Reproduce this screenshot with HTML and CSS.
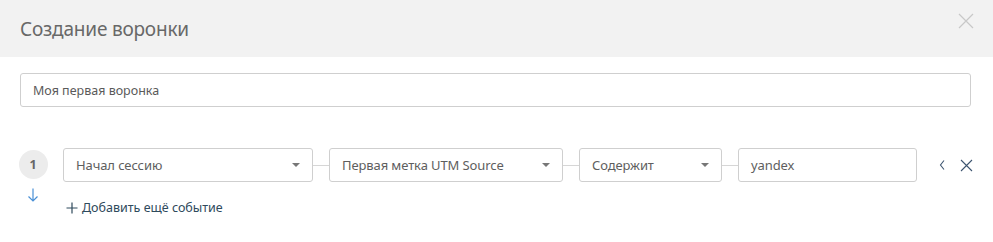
FILE: index.html
```html
<!DOCTYPE html>
<html lang="ru">
<head>
<meta charset="utf-8">
<link rel="stylesheet" href="styles.css">
</head>
<body>
<div class="modal">
  <div class="header">
    <h1 class="title">Создание воронки</h1>
    <svg class="close" width="16" height="16" viewBox="0 0 16 16"><path d="M1 1L15 15M15 1L1 15" stroke="#c8c8c8" stroke-width="1.2" fill="none"/></svg>
  </div>
  <div class="body">
    <div class="name-input">Моя первая воронка</div>
    <div class="step">
      <div class="step-side">
        <div class="num">1</div>
        <svg class="down" width="12" height="14" viewBox="0 0 12 14"><path d="M6 0.5V13M1.5 8.5L6 13L10.5 8.5" stroke="#4a90d6" stroke-width="1.2" fill="none"/></svg>
      </div>
      <div class="step-main">
        <div class="fields">
          <div class="field select s1"><span>Начал сессию</span><i class="caret"></i></div>
          <div class="link"></div>
          <div class="field select s2"><span>Первая метка UTM Source</span><i class="caret"></i></div>
          <div class="link"></div>
          <div class="field select s3"><span>Содержит</span><i class="caret"></i></div>
          <div class="link"></div>
          <div class="field s4"><span>yandex</span></div>
          <div class="actions">
            <svg width="8" height="12" viewBox="0 0 8 12"><path d="M6 1.5L2.5 6L6 10.5" stroke="#3d5570" stroke-width="1.1" fill="none"/></svg>
            <svg width="13" height="13" viewBox="0 0 13 13"><path d="M1 1L12 12M12 1L1 12" stroke="#3d5570" stroke-width="1.1" fill="none"/></svg>
          </div>
        </div>
        <div class="add"><svg class="plus" width="12" height="12" viewBox="0 0 12 12"><path d="M6 0.5V11.5M0.5 6H11.5" stroke="#2f4a5c" stroke-width="1.2" fill="none"/></svg>Добавить ещё событие</div>
      </div>
    </div>
  </div>
</div>
</body>
</html>
```
FILE: styles.css
```css
* { box-sizing: border-box; }
html, body { margin: 0; padding: 0; background: #fff; }
body { font-family: "Noto Sans", "Open Sans", sans-serif; color: #555; width: 993px; height: 242px; overflow: hidden; }
.header { height: 57px; background: #f2f2f2; display: flex; align-items: center; justify-content: space-between; padding: 0 19px 0 20px; }
.title { margin: 0; font-size: 19px; font-weight: 400; color: #686868; letter-spacing: -0.2px; padding-top: 1px; }
.close { margin-top: -16px; }
.body { padding: 16px 22px 0 20px; }
.name-input { height: 34px; border: 1px solid #cfcfcf; border-radius: 3px; display: flex; align-items: center; padding-left: 12px; font-size: 12.5px; color: #5a5a5a; }
.step { display: flex; margin-top: 41px; }
.step-side { width: 44px; display: flex; flex-direction: column; align-items: center; padding-right: 16px; margin-left: -1px; }
.num { width: 29px; height: 29px; border-radius: 50%; background: #ececec; display: flex; align-items: center; justify-content: center; font-size: 12.5px; font-weight: 700; color: #666; margin-top: 2px; }
.down { margin-top: 9px; }
.step-main { display: flex; flex-direction: column; }
.fields { display: flex; align-items: center; }
.field { height: 34px; border: 1px solid #cfcfcf; border-radius: 3px; display: flex; align-items: center; padding: 0 12px; font-size: 13px; color: #5e5e5e; letter-spacing: -0.1px; }
.select { justify-content: space-between; }
.s1 { width: 250px; }
.s2 { width: 234px; }
.s3 { width: 143px; }
.s4 { width: 179px; }
.link { width: 16px; height: 1px; background: #d6d6d6; }
.caret { width: 0; height: 0; border-left: 4px solid transparent; border-right: 4px solid transparent; border-top: 4px solid #777; }
.actions { display: flex; align-items: center; gap: 14px; margin-left: 21px; }
.add { margin-top: 17px; margin-left: 3px; font-size: 12.5px; color: #2f4a5c; display: flex; align-items: center; }
.plus { margin-right: 4px; }
```
